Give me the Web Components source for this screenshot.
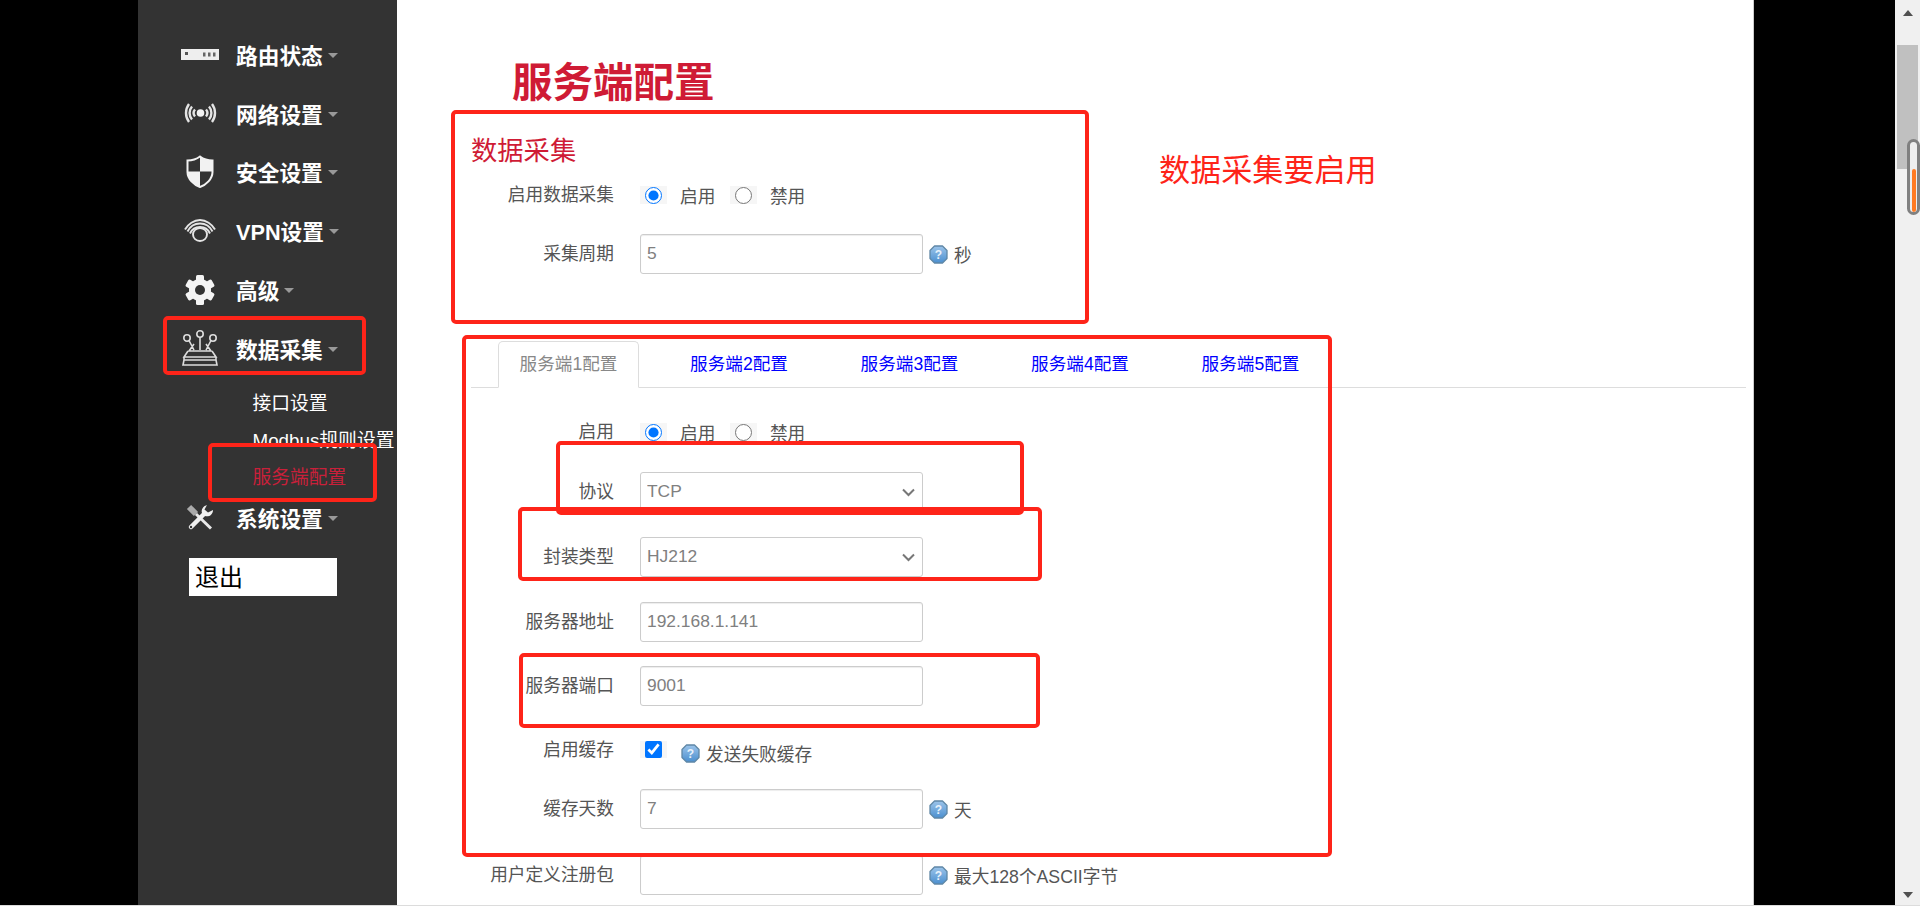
<!DOCTYPE html>
<html lang="zh">
<head>
<meta charset="utf-8">
<title>服务端配置</title>
<style>
    html, body { margin: 0; height: 906px; overflow: hidden; background: #fff; }
    body { font-family: "Liberation Sans", "Noto Sans CJK SC", sans-serif; color: #555; }
</style>
</head>
<body>
<app-shell>
    <side-menu slot="menu">
        <side-item>
            <svg slot="icon" width="38" height="11" viewBox="0 0 38 11"><rect width="38" height="11" fill="#eee"/><rect x="4" y="3" width="3" height="3" fill="#555"/><rect x="22" y="3.5" width="2.5" height="4" fill="#666"/><rect x="27" y="3.5" width="2.5" height="4" fill="#666"/><rect x="32" y="3.5" width="2.5" height="4" fill="#666"/></svg>
            路由状态
        </side-item>
        <side-item>
            <svg slot="icon" width="33" height="22" viewBox="0 0 33 22" fill="none" stroke="#e4e4e4" stroke-width="2.400"><circle cx="16.5" cy="11" r="3.8" fill="#f2f2f2" stroke="none"/><path d="M11 7.500a5.500 5.500 0 0 0 0 7M8 4.500a10 10 0 0 0 0 13M5 2a15 15 0 0 0 0 18M22 7.500a5.500 5.500 0 0 1 0 7M25 4.500a10 10 0 0 1 0 13M28 2a15 15 0 0 1 0 18"/></svg>
            网络设置
        </side-item>
        <side-item>
            <svg slot="icon" width="28" height="33" viewBox="0 0 28 33"><path d="M14 1.500C10 4.500 5.500 5.500 1.500 5.500V17C1.500 24 8 30 14 32C20 30 26.500 24 26.500 17V5.500C22.500 5.500 18 4.500 14 1.500Z" fill="none" stroke="#f2f2f2" stroke-width="2"/><path d="M14 1.500C18 4.500 22.500 5.500 26.500 5.500V16.500H14ZM1.500 16.500H14V32C8 30 1.500 24 1.500 17Z" fill="#f2f2f2"/></svg>
            安全设置
        </side-item>
        <side-item>
            <svg slot="icon" width="32" height="23" viewBox="0 0 32 23" fill="none" stroke="#e4e4e4" stroke-width="1.900"><ellipse cx="16" cy="15.500" rx="7" ry="6.500"/><path d="M6 14.500C8 10 12 8 16 8S24 10 26 14.500M1 10.500C4 5 10 1 16 1S28 5 31 10.500M3.500 12.500C6 7.500 11 4.500 16 4.500S26 7.500 28.500 12.500"/></svg>
            VPN设置
        </side-item>
        <side-item>
            <svg slot="icon" width="32" height="30" viewBox="0 0 32 30"><g fill="#f4f4f4"><circle cx="16" cy="15" r="11"/><rect x="12" y="0" width="8" height="30" rx="1.500"/><rect x="12" y="0" width="8" height="30" rx="1.500" transform="rotate(60 16 15)"/><rect x="12" y="0" width="8" height="30" rx="1.500" transform="rotate(120 16 15)"/></g><circle cx="16" cy="15" r="5" fill="#333"/></svg>
            高级
        </side-item>
        <side-item>
            <svg slot="icon" width="36" height="36" viewBox="0 0 36 36" fill="none" stroke="#ddd" stroke-width="1.600"><circle cx="18" cy="4" r="3.200"/><circle cx="5" cy="8" r="3.200"/><circle cx="31" cy="8" r="3.200"/><path d="M18 7V20M7 10.500L12 20M29 10.500L24 20M12 14L7 21H29L24 14M6 21L2 27H34L30 21M2 27V30H34V27M2 30L1 35H35L34 30"/></svg>
            数据采集
        </side-item>
        <side-group>
            <side-sub>接口设置</side-sub>
            <side-sub>Modbus规则设置</side-sub>
            <side-sub active>服务端配置</side-sub>
        </side-group>
        <side-item>
            <svg slot="icon" width="28" height="27" viewBox="0 0 28 27" fill="none"><path d="M3 3L10 10" stroke="#aaa" stroke-width="6"/><path d="M10 10L25 24.500" stroke="#e8e8e8" stroke-width="3"/><path d="M5 23L18 10" stroke="#f0f0f0" stroke-width="4.500" stroke-linecap="round"/><path d="M17 11A6 6 0 0 1 20 1.500L21 1L18.500 5.500L22 8.500L27 6A6 6 0 0 1 19 12Z" fill="#f0f0f0"/><circle cx="5" cy="23" r="1.200" fill="#333"/></svg>
            系统设置
        </side-item>
        <logout-box>退出</logout-box>
    </side-menu>

    <main-panel slot="main">
        <page-title>服务端配置</page-title>
        <section-title>数据采集</section-title>
        <form-row label="启用数据采集" style="--h:48px;--lh:18px"><radio-pair on="启用" off="禁用"></radio-pair></form-row>
        <form-row label="采集周期" style="--h:107px"><text-field value="5"></text-field><help-tip>秒</help-tip></form-row>
        <tab-bar>
            <tab-item active>服务端1配置</tab-item>
            <tab-item>服务端2配置</tab-item>
            <tab-item>服务端3配置</tab-item>
            <tab-item>服务端4配置</tab-item>
            <tab-item>服务端5配置</tab-item>
        </tab-bar>
        <form-row label="启用" style="--h:49px;--lh:18px"><radio-pair on="启用" off="禁用"></radio-pair></form-row>
        <form-row label="协议" style="--h:65px"><select-field value="TCP"></select-field></form-row>
        <form-row label="封装类型" style="--h:65px"><select-field value="HJ212"></select-field></form-row>
        <form-row label="服务器地址" style="--h:64px"><text-field value="192.168.1.141"></text-field></form-row>
        <form-row label="服务器端口" style="--h:75px"><text-field value="9001"></text-field></form-row>
        <form-row label="启用缓存" style="--h:48px;--lh:18px"><check-box></check-box><help-tip near>发送失败缓存</help-tip></form-row>
        <form-row label="缓存天数" style="--h:66px"><text-field value="7"></text-field><help-tip>天</help-tip></form-row>
        <form-row label="用户定义注册包" style="--h:50px"><text-field value=""></text-field><help-tip>最大128个ASCII字节</help-tip></form-row>
    </main-panel>

    <scroll-rail slot="rail"></scroll-rail>

    <!-- hand drawn notes on top of the screenshot -->
    <red-box slot="marks" x="451" y="110" w="638" h="214"></red-box>
    <red-box slot="marks" x="462" y="335" w="870" h="522"></red-box>
    <red-box slot="marks" x="163" y="316" w="203" h="59"></red-box>
    <red-box slot="marks" x="208" y="443" w="169" h="59"></red-box>
    <red-box slot="marks" x="556" y="441" w="468" h="74"></red-box>
    <red-box slot="marks" x="518" y="507" w="524" h="74"></red-box>
    <red-box slot="marks" x="519" y="653" w="521" h="75"></red-box>
    <red-note slot="marks" x="1159" y="153">数据采集要启用</red-note>
</app-shell>

<script>
class AppShell extends HTMLElement {
    constructor() {
        super()
        this.attachShadow({mode : 'open'})
        this.shadowRoot.innerHTML = `
            <style>
                :host { display: block; position: relative; width: 1920px; height: 906px; overflow: hidden; }
                .cols { display: grid; grid-template-columns: 138px 259px 1357px 141px 25px; height: 905px; }
                .black { background: #000; }
                .foot { height: 1px; background: #dcdcdc; }
            </style>
            <div class="cols">
                <div class="black"></div>
                <slot name="menu"></slot>
                <slot name="main"></slot>
                <div class="black"></div>
                <slot name="rail"></slot>
            </div>
            <div class="foot"></div>
            <slot name="marks"></slot>
            `
    }
}

class SideMenu extends HTMLElement {
    constructor() {
        super()
        this.attachShadow({mode : 'open'})
        this.shadowRoot.innerHTML = `
            <style>
                :host { display: block; background: #333; padding-top: 25px; overflow: visible; }
            </style>
            <slot></slot>
            `
    }
}

class SideItem extends HTMLElement {
    constructor() {
        super()
        this.attachShadow({mode : 'open'})
        this.shadowRoot.innerHTML = `
            <style>
                :host { display: flex; align-items: center; height: 58.8px; padding-left: 30px; color: #fff; font-size: 21.7px; font-weight: bold; white-space: nowrap; }
                .icon { display: flex; justify-content: center; align-items: center; width: 64px; margin-right: 4px; }
                .caret { width: 0; height: 0; margin: 2px 0 0 5px; border-left: 5.5px solid transparent; border-right: 5.5px solid transparent; border-top: 5px solid #999; }
            </style>
            <span class="icon"><slot name="icon"></slot></span>
            <slot></slot>
            <span class="caret"></span>
            `
    }
}

class SideGroup extends HTMLElement {
    constructor() {
        super()
        this.attachShadow({mode : 'open'})
        this.shadowRoot.innerHTML = `
            <style>
                :host { display: block; padding-top: 7px; margin-bottom: -8px; }
            </style>
            <slot></slot>
            `
    }
}

class SideSub extends HTMLElement {
    constructor() {
        super()
        this.attachShadow({mode : 'open'})
        this.shadowRoot.innerHTML = `
            <style>
                :host { display: block; height: 37px; line-height: 37px; padding-left: 114.5px; color: #fff; font-size: 18.8px; white-space: nowrap; }
                :host([active]) { color: #c9203a; }
            </style>
            <slot></slot>
            `
    }
}

class LogoutBox extends HTMLElement {
    constructor() {
        super()
        this.attachShadow({mode : 'open'})
        this.shadowRoot.innerHTML = `
            <style>
                :host { display: block; width: 142px; height: 38px; line-height: 40px; margin: 11px 0 0 51px; padding-left: 6px; background: #fff; color: #000; font-size: 24px; }
            </style>
            <slot></slot>
            `
    }
}

class MainPanel extends HTMLElement {
    constructor() {
        super()
        this.attachShadow({mode : 'open'})
        this.shadowRoot.innerHTML = `
            <style>
                :host { display: block; box-sizing: border-box; background: #fff; padding: 63px 7px 0 74px; border-right: 1px solid #ccc; overflow: hidden; }
            </style>
            <slot></slot>
            `
    }
}

class PageTitle extends HTMLElement {
    constructor() {
        super()
        this.attachShadow({mode : 'open'})
        this.shadowRoot.innerHTML = `
            <style>
                :host { display: block; margin-left: 41px; font-size: 40.5px; line-height: 40px; font-weight: bold; color: #cf1b35; }
            </style>
            <slot></slot>
            `
    }
}

class SectionTitle extends HTMLElement {
    constructor() {
        super()
        this.attachShadow({mode : 'open'})
        this.shadowRoot.innerHTML = `
            <style>
                :host { display: block; margin: 33px 0 20px; font-size: 26.3px; line-height: 30px; color: #cf1b35; }
            </style>
            <slot></slot>
            `
    }
}

class FormRow extends HTMLElement {
    constructor() {
        super()
        this.attachShadow({mode : 'open'})
        this.shadowRoot.innerHTML = `
            <style>
                :host { display: grid; grid-template-columns: 143px 1fr; column-gap: 26px; height: var(--h, 65px); font-size: 17.7px; color: #555; }
                .label { text-align: right; line-height: var(--lh, 40px); white-space: nowrap; }
                .control { display: flex; align-items: flex-start; }
            </style>
            <div class="label"></div>
            <div class="control"><slot></slot></div>
            `
    }

    connectedCallback() {
        this.shadowRoot.querySelector('.label').textContent = this.getAttribute('label')
    }
}

class TextField extends HTMLElement {
    constructor() {
        super()
        this.attachShadow({mode : 'open'})
        this.shadowRoot.innerHTML = `
            <style>
                :host { display: block; }
                input { display: block; box-sizing: border-box; width: 283px; height: 40px; padding: 0 6px 2px; font: 17.4px "Liberation Sans", sans-serif; color: #808080; background: #fff; border: 1px solid #ccc; border-radius: 3px; box-shadow: inset 0 1px 1px rgba(0,0,0,.075); outline: none; }
            </style>
            <input type="text">
            `
    }

    connectedCallback() {
        this.shadowRoot.querySelector('input').setAttribute('value', this.getAttribute('value') || '')
    }
}

class SelectField extends HTMLElement {
    constructor() {
        super()
        this.attachShadow({mode : 'open'})
        this.shadowRoot.innerHTML = `
            <style>
                :host { display: block; position: relative; width: 283px; height: 40px; }
                select { display: block; box-sizing: border-box; width: 283px; height: 40px; padding: 0 6px 2px; font: 17.4px "Liberation Sans", sans-serif; color: #808080; background: #fff; border: 1px solid #ccc; border-radius: 3px; appearance: none; outline: none; }
                svg { position: absolute; right: 7px; top: 16px; pointer-events: none; }
            </style>
            <select><option></option></select>
            <svg width="15" height="9" viewBox="0 0 15 9" fill="none" stroke="#777" stroke-width="2"><path d="M2 1.500L7.500 7L13 1.500"/></svg>
            `
    }

    connectedCallback() {
        this.shadowRoot.querySelector('option').textContent = this.getAttribute('value')
    }
}

class RadioPair extends HTMLElement {
    constructor() {
        super()
        this.attachShadow({mode : 'open'})
        this.shadowRoot.innerHTML = `
            <style>
                :host { display: flex; align-items: flex-start; height: 18px; }
                .box { display: flex; justify-content: center; align-items: center; width: 27px; height: 18px; background: #f6f6f6; }
                input { width: 17px; height: 17px; margin: 0; }
                .text { margin: 2px 14.5px 0 13px; line-height: 18px; white-space: nowrap; }
            </style>
            <span class="box"><input type="radio" name="state" checked></span>
            <span class="text on"></span>
            <span class="box"><input type="radio" name="state"></span>
            <span class="text off"></span>
            `
    }

    connectedCallback() {
        this.shadowRoot.querySelector('.on').textContent = this.getAttribute('on')
        this.shadowRoot.querySelector('.off').textContent = this.getAttribute('off')
    }
}

class CheckBox extends HTMLElement {
    constructor() {
        super()
        this.attachShadow({mode : 'open'})
        this.shadowRoot.innerHTML = `
            <style>
                :host { display: flex; justify-content: center; align-items: center; width: 27px; height: 17px; background: #f6f6f6; }
                input { width: 17px; height: 17px; margin: 0; }
            </style>
            <input type="checkbox" checked>
            `
    }
}

class HelpTip extends HTMLElement {
    constructor() {
        super()
        this.attachShadow({mode : 'open'})
        this.shadowRoot.innerHTML = `
            <style>
                :host { display: flex; align-items: center; height: 40px; margin-left: 6px; white-space: nowrap; color: #555; }
                :host([near]) { height: 18px; margin: 3px 0 0 14px; }
                svg { margin-right: 6px; flex: none; }
                text { font: bold 12px "Liberation Sans", sans-serif; fill: #e8f2fb; }
            </style>
            <svg width="19" height="19" viewBox="0 0 19 19">
                <defs><linearGradient id="g" x1="0" y1="0" x2="0" y2="1"><stop offset="0" stop-color="#9cc4ea"/><stop offset="1" stop-color="#4b8fcf"/></linearGradient></defs>
                <path d="M5.500 1H13.500L18 5.500V13.500L13.500 18H5.500L1 13.500V5.500Z" fill="url(#g)" stroke="#5f87a6" stroke-width="1.300" stroke-linejoin="round"/>
                <text x="9.500" y="13.500" text-anchor="middle">?</text>
            </svg>
            <slot></slot>
            `
    }
}

class TabBar extends HTMLElement {
    constructor() {
        super()
        this.attachShadow({mode : 'open'})
        this.shadowRoot.innerHTML = `
            <style>
                :host { display: flex; height: 46px; padding-left: 27px; margin-bottom: 35px; border-bottom: 1px solid #ddd; }
            </style>
            <slot></slot>
            `
    }
}

class TabItem extends HTMLElement {
    constructor() {
        super()
        this.attachShadow({mode : 'open'})
        this.shadowRoot.innerHTML = `
            <style>
                :host { display: block; box-sizing: border-box; width: 141px; height: 47px; margin-right: 29.5px; line-height: 45px; text-align: center; font-size: 17.6px; color: #00f; border: 1px solid transparent; white-space: nowrap; }
                :host([active]) { color: #888; background: #fff; border-color: #ddd; border-bottom-color: #fff; border-radius: 5px 5px 0 0; }
            </style>
            <slot></slot>
            `
    }
}

class ScrollRail extends HTMLElement {
    constructor() {
        super()
        this.attachShadow({mode : 'open'})
        this.shadowRoot.innerHTML = `
            <style>
                :host { display: flex; flex-direction: column; position: relative; background: #f0f0f0; height: 905px; }
                .up, .down { flex: none; width: 0; height: 0; margin: 0 auto; border-left: 5.5px solid transparent; border-right: 5.5px solid transparent; }
                .up { margin-top: 10px; border-bottom: 6px solid #505050; }
                .thumb { flex: none; height: 124px; margin: 29px 2px 0; background: #c0c0c0; }
                .down { margin-top: auto; margin-bottom: 7px; border-top: 6px solid #505050; }
                /* grey pill from the capture tool, lies on top of the thumb */
                .pill { position: absolute; left: 12px; top: 139px; box-sizing: border-box; width: 13px; height: 76px; padding: 1px 1.5px; border: 3px solid #808080; border-radius: 7px; background: #eee; overflow: hidden; }
                .pill i { display: block; height: 43px; margin-top: 26px; background: #ff7a22; border-radius: 2px; }
            </style>
            <div class="up"></div>
            <div class="thumb"></div>
            <div class="down"></div>
            <div class="pill"><i></i></div>
            `
    }
}

class RedBox extends HTMLElement {
    constructor() {
        super()
        this.attachShadow({mode : 'open'})
        this.shadowRoot.innerHTML = `
            <style>
                :host { display: block; position: absolute; box-sizing: border-box; border: 4px solid #fe2419; border-radius: 5px; pointer-events: none; }
            </style>
            `
    }

    connectedCallback() {
        this.style.left = this.getAttribute('x') + 'px'
        this.style.top = this.getAttribute('y') + 'px'
        this.style.width = this.getAttribute('w') + 'px'
        this.style.height = this.getAttribute('h') + 'px'
    }
}

class RedNote extends HTMLElement {
    constructor() {
        super()
        this.attachShadow({mode : 'open'})
        this.shadowRoot.innerHTML = `
            <style>
                :host { display: block; position: absolute; color: #fe2419; font-size: 31.1px; line-height: 36px; white-space: nowrap; }
            </style>
            <slot></slot>
            `
    }

    connectedCallback() {
        this.style.left = this.getAttribute('x') + 'px'
        this.style.top = this.getAttribute('y') + 'px'
    }
}

window.customElements.define('app-shell', AppShell)
window.customElements.define('side-menu', SideMenu)
window.customElements.define('side-item', SideItem)
window.customElements.define('side-group', SideGroup)
window.customElements.define('side-sub', SideSub)
window.customElements.define('logout-box', LogoutBox)
window.customElements.define('main-panel', MainPanel)
window.customElements.define('page-title', PageTitle)
window.customElements.define('section-title', SectionTitle)
window.customElements.define('form-row', FormRow)
window.customElements.define('text-field', TextField)
window.customElements.define('select-field', SelectField)
window.customElements.define('radio-pair', RadioPair)
window.customElements.define('check-box', CheckBox)
window.customElements.define('help-tip', HelpTip)
window.customElements.define('tab-bar', TabBar)
window.customElements.define('tab-item', TabItem)
window.customElements.define('scroll-rail', ScrollRail)
window.customElements.define('red-box', RedBox)
window.customElements.define('red-note', RedNote)
</script>
</body>
</html>
